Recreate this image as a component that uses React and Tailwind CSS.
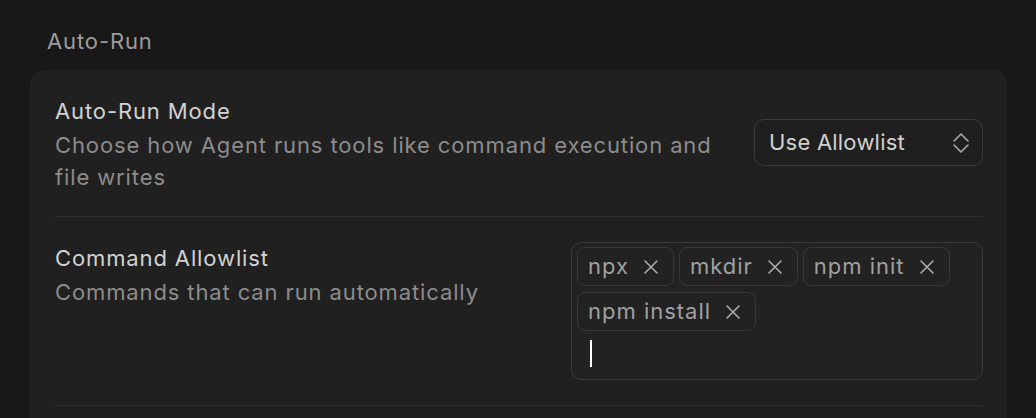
import React from 'react'

const font = { fontFamily: 'Inter, "Noto Sans", sans-serif' }

function XIcon() {
    return (
        <svg width="16" height="16" viewBox="0 0 16 16" fill="none" stroke="currentColor" strokeWidth="1.6" strokeLinecap="round">
            <path d="M2 2 L14 14 M14 2 L2 14" />
        </svg>
    )
}

function Chevrons() {
    return (
        <svg width="18" height="22" viewBox="0 0 18 22" fill="none" stroke="currentColor" strokeWidth="1.6" strokeLinecap="round" strokeLinejoin="round">
            <path d="M2 9 L9 2 L16 9" />
            <path d="M2 13 L9 20 L16 13" />
        </svg>
    )
}

function Tag({ label }) {
    return (
        <div className="flex items-center gap-[14px] h-[39px] pl-[10px] pr-[14px] rounded-[8px] border border-[#363636] bg-[#222222] text-[#a0a0a0] text-[22px] tracking-[0.045em]">
            <span>{label}</span>
            <span className="text-[#aaaaaa]"><XIcon /></span>
        </div>
    )
}

export default function App() {
    const tags = ['npx', 'mkdir', 'npm init', 'npm install']

    return (
        <div className="w-[1036px] h-[418px] overflow-hidden bg-[#181818] pl-[30px] pr-[29px] pt-[27px] tracking-[0.055em]" style={font}>
            <div className="ml-[17px] text-[22px] leading-[28px] text-[#9c9c9c]">Auto-Run</div>

            <div className="mt-[15px] rounded-[14px] bg-[#202020] pl-[25px] pr-[24px] h-[400px]">
                <div className="flex items-start justify-between pt-[25px] pb-[23px] border-b border-[#2e2e2e]">
                    <div className="w-[690px]">
                        <div className="text-[22px] leading-[32px] text-[#d2d2d2]">Auto-Run Mode</div>
                        <div className="mt-[2px] text-[22px] leading-[32px] text-[#8c8c8c]">
                            Choose how Agent runs tools like command execution and file writes
                        </div>
                    </div>
                    <div className="mt-[24px] flex items-center justify-between w-[229px] h-[47px] pl-[14px] pr-[12px] rounded-[10px] border border-[#3a3a3a] bg-[#1f1f1f] text-[22px] text-[#d0d0d0] tracking-[0.01em]">
                        <span>Use Allowlist</span>
                        <span className="text-[#a8a8a8]"><Chevrons /></span>
                    </div>
                </div>

                <div className="flex items-start justify-between pt-[25px] pb-[25px] border-b border-[#2e2e2e]">
                    <div>
                        <div className="text-[22px] leading-[32px] text-[#d2d2d2]">Command Allowlist</div>
                        <div className="mt-[2px] text-[22px] leading-[32px] text-[#8c8c8c]">Commands that can run automatically</div>
                    </div>
                    <div className="w-[412px] h-[138px] rounded-[10px] border border-[#3a3a3a] bg-[#222222] pl-[5px] pr-[5px] pt-[4px]">
                        <div className="flex flex-wrap gap-x-[5px] gap-y-[6px]">
                            {tags.map((t) => (
                                <Tag key={t} label={t} />
                            ))}
                        </div>
                        <div className="h-[44px] flex items-center pl-[13px]">
                            <div className="w-[2px] h-[27px] bg-white"></div>
                        </div>
                    </div>
                </div>
            </div>
        </div>
    )
}
